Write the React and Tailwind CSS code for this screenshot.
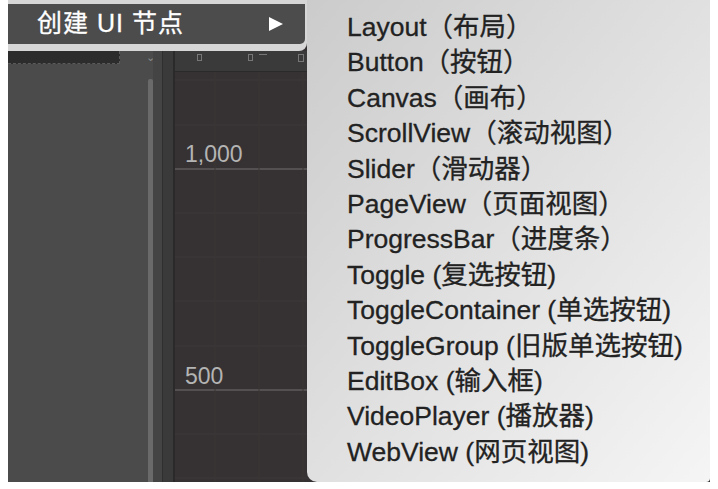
import React from "react";

const items = [
  "Layout（布局）",
  "Button（按钮）",
  "Canvas（画布）",
  "ScrollView（滚动视图）",
  "Slider（滑动器）",
  "PageView（页面视图）",
  "ProgressBar（进度条）",
  "Toggle (复选按钮)",
  "ToggleContainer (单选按钮)",
  "ToggleGroup (旧版单选按钮)",
  "EditBox (输入框)",
  "VideoPlayer (播放器)",
  "WebView (网页视图)",
];

const font = { fontFamily: '"Liberation Sans", "Noto Sans CJK SC", sans-serif' };

function Grid() {
  const hs = [36, 80, 125, 169, 213, 257, 301, 346, 390, 434, 478];
  const vs = [40, 84, 128];
  return (
    <svg className="absolute inset-0" width="140" height="410" viewBox="0 0 140 410">
      {hs.map((y, i) => {
        const major = y === 169 || y === 390;
        return (
          <line key={"h" + i} x1="0" x2="140" y1={y - 72} y2={y - 72} stroke={major ? "#5f5b5c" : "#3d393a"} strokeWidth={major ? 1.5 : 1} />
        );
      })}
      {vs.map((x, i) => (
        <line key={"v" + i} x1={x} x2={x} y1="0" y2="410" stroke="#3a3637" strokeWidth="1" />
      ))}
    </svg>
  );
}

export default function App() {
  return (
    <div className="w-[718px] h-[489px] bg-white relative overflow-hidden" style={font}>
      {/* editor background */}
      <div className="pl-[8px]">
        <div className="flex h-[482px] w-[702px] bg-[#4b4b4b]">
          <div className="w-[139px] flex flex-col">
            <div className="h-[51px]" />
            <div className="h-[13px] w-[112px] bg-[#2c2c2c] border-b border-r border-dashed border-[#5a5a5a]" />
            <div className="flex-1 bg-[#4b4b4b]" />
          </div>
          <div className="w-[6px] flex flex-col items-center">
            <div className="h-[51px]" />
            <div className="text-[#8a8a8a] text-[11px] leading-none mt-[1px]">⌄</div>
            <div className="mt-[16px] w-[5px] flex-1 bg-[#6a6a6a] rounded-t-[2px]" />
          </div>
          <div className="w-[9px] bg-[#444444]" />
          <div className="w-[1px] bg-[#2f2f2f]" />
          <div className="w-[10px] bg-[#3a3a3a]" />
          <div className="w-[2px] bg-[#2a2a2a]" />
          <div className="flex-1 flex flex-col bg-[#363233]">
            <div className="h-[51px]" />
            <div className="h-[21px] bg-[#3a3a3a] border-b border-[#2a2a2a] relative">
              <div className="absolute left-[22px] top-[3px] w-[5px] h-[7px] border border-[#777]" />
              <div className="absolute left-[73px] top-[3px] w-[5px] h-[7px] border border-[#777]" />
              <div className="absolute left-[84px] top-[3px] w-[8px] h-[1px] bg-[#777]" />
              <div className="absolute left-[123px] top-[3px] w-[6px] h-[8px] border border-[#777]" />
            </div>
            <div className="flex-1 relative overflow-hidden">
              <Grid />
              <div className="absolute left-[10px] top-[71px] text-[23px] leading-none text-[#b4b4b4]">1,000</div>
              <div className="absolute left-[10px] top-[293px] text-[23px] leading-none text-[#b4b4b4]">500</div>
            </div>
          </div>
        </div>
      </div>

      {/* parent menu */}
      <div className="absolute left-[8px] top-[-10px] w-[299px] h-[61px] bg-[#d6d6d6] rounded-br-[8px] pt-[14px] pr-[2px]">
        <div className="h-[40px] bg-[#4c4c4c] rounded-br-[5px] flex items-center pl-[29px] pr-[21px] text-white text-[25px]">
          <span className="flex-1 tracking-[1px] [-webkit-text-stroke:0.3px_#ffffff]">创建 UI 节点</span>
          <svg width="16" height="16" viewBox="0 0 16 16">
            <polygon points="1,1 15,8 1,15" fill="#ffffff" />
          </svg>
        </div>
      </div>

      {/* submenu */}
      <div className="absolute left-[307px] top-[-10px] w-[403px] h-[492px] rounded-bl-[10px] rounded-br-[4px] bg-linear-to-br from-[#cbcbcb] via-[#e0e0e0] to-[#f5f5f5] pt-[20px] pl-[40px]">
        {items.map((t) => (
          <div key={t} className="h-[35.4px] leading-[35.4px] text-[26.5px] text-[#222222] whitespace-nowrap [-webkit-text-stroke:0.3px_#222222]">
            {t}
          </div>
        ))}
      </div>
    </div>
  );
}
